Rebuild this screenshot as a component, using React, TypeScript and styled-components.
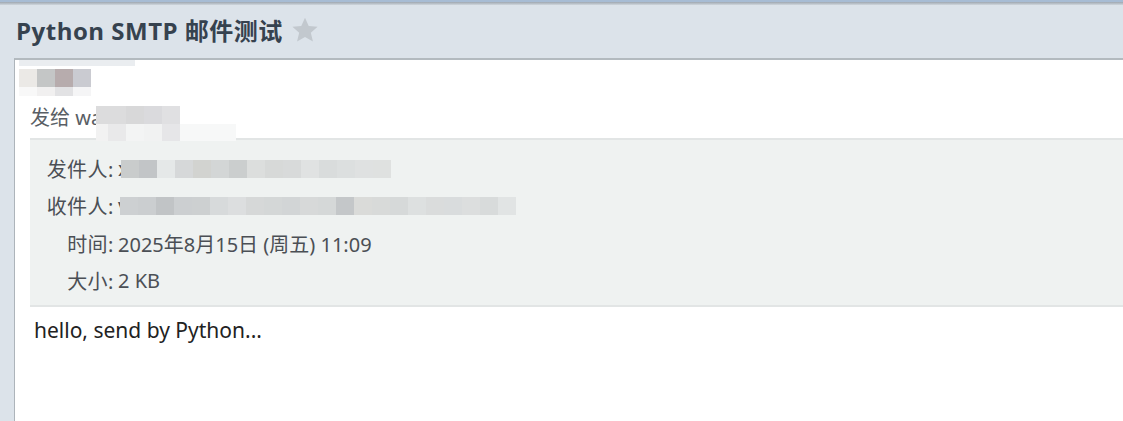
import React from "react";
import styled, { createGlobalStyle } from "styled-components";

const Global = createGlobalStyle`
  html, body { margin: 0; padding: 0; background: #dce3ea; }
  body { font-family: "Noto Sans", "Noto Sans CJK SC", sans-serif; }
`;

const Page = styled.div`
  width: 1123px;
  height: 421px;
  overflow: hidden;
  background: #dce3ea;
  display: flex;
  flex-direction: column;
  border-top: 2px solid #a7bcd4;
  box-sizing: border-box;
`;

const Shade = styled.div`
  height: 3px;
  background: linear-gradient(#9ea7b0, #cfd6dd);
`;

const TitleBar = styled.div`
  height: 53px;
  display: flex;
  align-items: center;
  padding-left: 16px;
  gap: 8px;
  box-sizing: border-box;
  padding-bottom: 4px;
`;

const Title = styled.h1`
  margin: 0;
  font-family: "Open Sans", "Noto Sans CJK SC", sans-serif;
  font-size: 24px;
  font-weight: 700;
  color: #36424f;
  letter-spacing: 0.5px;
`;

const Star = styled.svg`
  width: 28px;
  height: 28px;
  margin-top: 1px;
`;

const Content = styled.div`
  flex: 1;
  margin-left: 14px;
  background: #fff;
  border-top: 2px solid #b3babf;
  border-left: 1px solid #adb4ba;
  display: flex;
  flex-direction: column;
`;

const Mosaic = styled.div<{ $w: number; $h: number }>`
  display: flex;
  height: ${(p) => p.$h}px;
  width: ${(p) => p.$w}px;
  flex-shrink: 0;
`;

const Cell = styled.div<{ $c: string; $w?: number }>`
  width: ${(p) => p.$w ?? 18}px;
  height: 100%;
  background: ${(p) => p.$c};
  flex-shrink: 0;
`;

const SenderBlock = styled.div`
  padding-left: 4px;
  display: flex;
  flex-direction: column;
`;

const TopStrip = styled.div`
  width: 116px;
  height: 6px;
  background: #eaedf0;
`;

const SendTo = styled.div`
  margin-left: 15px;
  display: flex;
  align-items: flex-start;
  font-size: 20px;
  color: #595e65;
  height: 42px;
  line-height: 28px;
`;

const SendToText = styled.span`
  margin-top: 8px;
  white-space: nowrap;
`;

const MosaicStack = styled.div`
  display: flex;
  flex-direction: column;
  margin-top: 10px;
  position: relative;
  z-index: 1;
`;

const HeaderPanel = styled.div`
  margin-left: 15px;
  background: #eff2f1;
  border-top: 2px solid #e2e5e5;
  border-bottom: 2px solid #e2e5e5;
  padding: 10px 0 6px;
  display: grid;
  grid-template-columns: 84px 1fr;
  grid-auto-rows: 37.3px;
  align-items: center;
  column-gap: 4px;
  font-size: 20px;
  color: #4b4f55;
`;

const Label = styled.div`
  text-align: right;
  white-space: nowrap;
  letter-spacing: 0.5px;
`;

const Value = styled.div`
  display: flex;
  align-items: center;
  white-space: nowrap;
`;

const Body = styled.div`
  padding: 9px 0 0 19px;
  font-size: 21px;
  line-height: 29px;
  color: #222;
`;

const row = (colors: string[]) => colors.map((c, i) => <Cell key={i} $c={c} />);

export default function App() {
  return (
    <>
      <Global />
      <Page>
        <Shade />
        <TitleBar>
          <Title>Python SMTP 邮件测试</Title>
          <Star viewBox="0 0 24 24">
            <path
              d="M12 1.5l3.2 7 7.6.7-5.8 5.1 1.8 7.5L12 17.9l-6.8 3.9 1.8-7.5-5.8-5.1 7.6-.7z"
              fill="#c2c8ce"
            />
          </Star>
        </TitleBar>
        <Content>
          <SenderBlock>
            <TopStrip />
            <Mosaic $w={72} $h={18} style={{ marginTop: 3 }}>
              {row(["#ebe9e6", "#c4c6c6", "#b7acad", "#cacbd1"])}
            </Mosaic>
            <Mosaic $w={72} $h={9}>
              {row(["#f8f8f8", "#f1f0f0", "#e2e2e4", "#f5f5f6"])}
            </Mosaic>
          </SenderBlock>
          <SendTo>
            <SendToText>发给 wa</SendToText>
            <MosaicStack>
              <Mosaic $w={84} $h={18} style={{ marginLeft: -6 }}>
                <Cell $c="#dcdcdd" $w={12} />
                {row(["#dcdcdd", "#d8d8d9", "#dadadd", "#e0e0e2"])}
              </Mosaic>
              <Mosaic $w={140} $h={17} style={{ marginLeft: -6 }}>
                <Cell $c="#f2f2f2" $w={12} />
                {row(["#e9e9ea", "#f3f4f4", "#f1f2f2", "#e6e6e8"])}
                <Cell $c="#f7f8f8" $w={56} />
              </Mosaic>
            </MosaicStack>
          </SendTo>
          <HeaderPanel>
            <Label>发件人:</Label>
            <Value>
              <span>x</span>
              <Mosaic $w={275} $h={18} style={{ marginLeft: -8 }}>
                {row([
                  "#c9cccc", "#c2c5c7", "#e5e8e8", "#d6d8d9", "#d2d3d0", "#d3d6d6",
                  "#cbcece", "#dcdedd", "#d7d9d8", "#d8dada", "#e0e2e2", "#d9dcdc",
                  "#dcdfdf", "#dfe1e1", "#dfe1e0",
                ])}
              </Mosaic>
            </Value>
            <Label>收件人:</Label>
            <Value>
              <span>v</span>
              <Mosaic $w={401} $h={18} style={{ marginLeft: -8 }}>
                {row([
                  "#cdd0d2", "#cbced0", "#c1c4c6", "#cccfd1", "#cdd0d1", "#d7dadb",
                  "#dcdedf", "#d6d8d8", "#d4d7d7", "#d2d5d6", "#d7d9d9", "#d5d8d8",
                  "#c4c7c9", "#dadbd9", "#d8dad9", "#d6d9d9", "#dde0e0", "#dadcdc",
                  "#d9dcdd", "#dcdede", "#d8dbdb", "#e1e4e4",
                ])}
              </Mosaic>
            </Value>
            <Label>时间:</Label>
            <Value>2025年8月15日 (周五) 11:09</Value>
            <Label>大小:</Label>
            <Value>2 KB</Value>
          </HeaderPanel>
          <Body>hello, send by Python...</Body>
        </Content>
      </Page>
    </>
  );
}
